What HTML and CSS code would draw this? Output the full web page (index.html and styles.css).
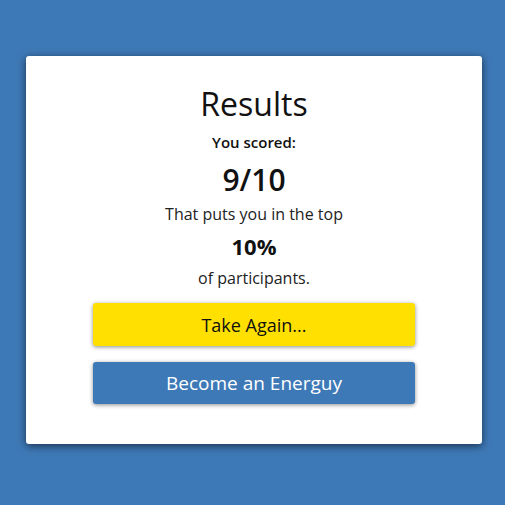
FILE: index.html
```html
<!DOCTYPE html>
<html>
<head>
<meta charset="utf-8">
<link rel="stylesheet" href="styles.css">
</head>
<body>
<div class="card">
  <h1 class="title">Results</h1>
  <p class="label">You scored:</p>
  <p class="score">9/10</p>
  <p class="text">That puts you in the top</p>
  <p class="pct">10%</p>
  <p class="text">of participants.</p>
  <div class="actions">
    <button class="btn btn-yellow">Take Again...</button>
    <button class="btn btn-blue">Become an Energuy</button>
  </div>
</div>
</body>
</html>
```
FILE: styles.css
```css
html, body {
  margin: 0;
  padding: 0;
}
body {
  background: #3e79b7;
  font-family: "Open Sans", "Lato", sans-serif;
  width: 505px;
  height: 505px;
  overflow: hidden;
}
.card {
  box-sizing: border-box;
  margin: 56px 0 0 26px;
  width: 456px;
  height: 388px;
  background: #fff;
  border-radius: 3px;
  box-shadow: 0 2px 8px rgba(0, 0, 0, 0.6);
  display: flex;
  flex-direction: column;
  align-items: center;
  padding: 0 67px;
  color: #111;
}
.title {
  margin: 28px 0 0;
  font-size: 32px;
  font-weight: 500;
  line-height: 40px;
}
.label {
  margin: 7px 0 0;
  font-size: 15px;
  font-weight: 600;
  line-height: 22px;
}
.score {
  margin: 10px 0 0;
  font-size: 30px;
  font-weight: 600;
  line-height: 34px;
}
.text {
  margin: 2px 0 0;
  font-size: 16px;
  line-height: 30px;
  color: #222;
}
.pct {
  margin: 0;
  font-size: 22px;
  font-weight: 700;
  line-height: 34px;
}
.pct + .text {
  margin-top: 0;
}
.actions {
  align-self: stretch;
  display: flex;
  flex-direction: column;
  gap: 16px;
  margin-top: 10px;
}
.btn {
  height: 43px;
  border: none;
  border-radius: 3px;
  font-family: inherit;
  font-size: 18px;
  font-weight: 500;
  box-shadow: 0 1px 4px rgba(0, 0, 0, 0.45);
}
.btn-yellow {
  background: #ffe000;
  color: #111;
}
.btn-blue {
  background: #3e79b7;
  color: #fff;
  height: 42px;
  font-size: 19px;
}
```
